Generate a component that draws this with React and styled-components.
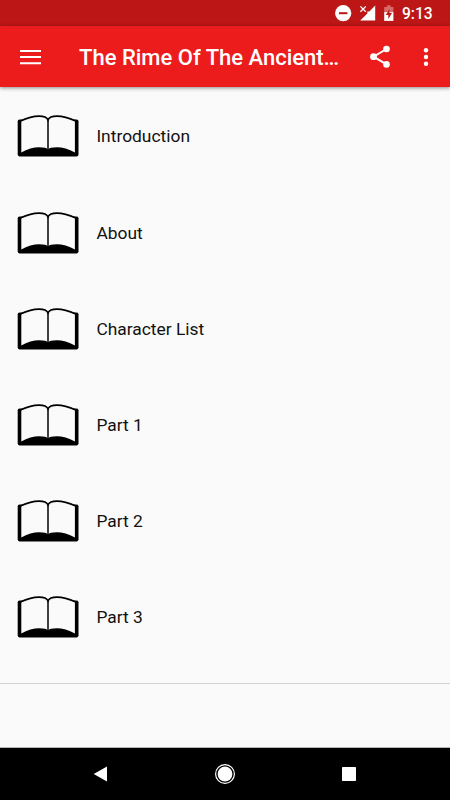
import React from 'react'
import styled, { createGlobalStyle } from 'styled-components'


const GlobalStyle = createGlobalStyle`
    *{
        box-sizing:border-box;
    }
    body{
        margin:0;
        background:#fafafa;
        font-family:Roboto, sans-serif;
    }
    svg{
        display:block;
        flex:none;
    }
`
const Screen = styled.div`
    width:450px;
    height:800px;
    display:flex;
    flex-direction:column;
    overflow:hidden;
    background:#fafafa;
`
const StatusBar = styled.div`
    flex:none;
    height:26px;
    padding-right:17px;
    display:flex;
    align-items:center;
    justify-content:flex-end;
    background:#bc1616;
    color:#fff;
`
const Clock = styled.span`
    width:31px;
    margin-left:8px;
    padding-top:2px;
    font-size:15.6px;
    font-weight:500;
    line-height:20px;
    white-space:nowrap;
`
const AppBar = styled.header`
    flex:none;
    height:61px;
    padding:0 17px 0 20px;
    display:flex;
    align-items:center;
    background:#ec1c1c;
    color:#fff;
    box-shadow:0 1px 4px rgba(0,0,0,0.45);
`
const BarButton = styled.button`
    padding:0;
    border:0;
    background:none;
    color:inherit;
    cursor:pointer;
    margin-left:${({ $gap }) => $gap || 0}px;
`
const Title = styled.h1`
    flex:1;
    margin:0 0 0 38px;
    padding-top:2px;
    font-size:22px;
    font-weight:500;
    line-height:30px;
    white-space:nowrap;
`
const List = styled.ul`
    flex:none;
    height:597px;
    margin:0;
    padding:1.3px 0 0;
    list-style:none;
    border-bottom:1px solid #d2d2d2;
`
const Row = styled.li`
    height:96.2px;
    padding-left:17px;
    display:flex;
    align-items:center;
    gap:17.4px;
`
const Label = styled.span`
    color:#111;
    font-size:17.4px;
    line-height:22px;
`
const Footer = styled.div`
    flex:1;
    border-bottom:1px solid #b4b4b4;
`
const NavBar = styled.nav`
    flex:none;
    height:52px;
    padding:0 94px 0 93px;
    display:flex;
    align-items:center;
    justify-content:space-between;
    background:#000;
    color:#fff;
`

const Book = () => (
    <svg width="62" height="42" viewBox="0 0 62 42">
        <rect x=".7" y="4.4" width="60.8" height="37" rx="1.8" fill="#000" />
        <path d="M4.3 6C10 3 17 1 22 1C27 1 30 2.6 31 5C32 2.6 35 1 40 1C45 1 52 3 57.900 6V37.600C52 34 45 32.300 40 32.300C35 32.300 32 33 31 34.800C30 33 27 32.300 22 32.300C17 32.300 10 34 4.300 37.600Z" fill="#fafafa" />
        <path d="M3.500 6C10 3 17 1.200 22 1.200C27 1.200 30 2.600 31 5C32 2.600 35 1.200 40 1.200C45 1.200 52 3 58.700 6" fill="none" stroke="#000" strokeWidth="1.7" />
        <path d="M31 4V35" stroke="#000" strokeWidth="1.5" />
    </svg>
)

const items = ['Introduction', 'About', 'Character List', 'Part 1', 'Part 2', 'Part 3']

export default () => (
    <Screen>
        <GlobalStyle />
        <StatusBar>
            <svg width="59" height="26" viewBox="0 0 59 26">
                <circle cx="8.2" cy="13.2" r="8.1" fill="#fff" />
                <path d="M4 12.200h8.400v2H4z" fill="#bc1616" />
                <path d="M40.200 5.600V20.600H25.200L32.400 13.400V11.500L34.300 11.500Z" fill="#fff" />
                <path d="M25.400 6.400l5.400 5.400M30.800 6.400l-5.400 5.400" stroke="#fff" strokeWidth="1.3" />
                <path d="M49.200 7h2.800V5.200h3.600V7h2.800v6H49.200z" fill="#d66a6a" />
                <path d="M49.200 12.200h9.200v8.700h-9.200z" fill="#fff" />
                <path d="M54.500 9l-3.700 6h2.500v4l3.700-6h-2.500z" fill="#bc1616" />
            </svg>
            <Clock>9:13</Clock>
        </StatusBar>
        <AppBar>
            <BarButton aria-label="Menu">
                <svg width="21" height="16" viewBox="0 0 21 16">
                    <path d="M0 1.900h21M0 8.100h21M0 14.300h21" stroke="#fff" strokeWidth="2" />
                </svg>
            </BarButton>
            <Title>The Rime Of The Ancient…</Title>
            <BarButton aria-label="Share">
                <svg width="21" height="24" viewBox="0 0 21 24">
                    <path d="M16.500 4L3.500 11.700L16.500 19.400" fill="none" stroke="#fff" strokeWidth="2" />
                    <circle cx="16.5" cy="4" r="3.3" fill="#fff" />
                    <circle cx="3.5" cy="11.7" r="3.4" fill="#fff" />
                    <circle cx="16.5" cy="19.4" r="3.3" fill="#fff" />
                </svg>
            </BarButton>
            <BarButton aria-label="More" $gap={28}>
                <svg width="14" height="20" viewBox="0 0 14 20">
                    <circle cx="7" cy="3.3" r="2.2" fill="#fff" />
                    <circle cx="7" cy="10" r="2.2" fill="#fff" />
                    <circle cx="7" cy="16.7" r="2.2" fill="#fff" />
                </svg>
            </BarButton>
        </AppBar>
        <List>
            {items.map(item => (
                <Row key={item}>
                    <Book />
                    <Label>{item}</Label>
                </Row>
            ))}
        </List>
        <Footer />
        <NavBar>
            <svg width="14" height="16" viewBox="0 0 14 16">
                <path d="M14 .5V15.500L.7 8Z" fill="#fff" />
            </svg>
            <svg width="22" height="22" viewBox="0 0 22 22">
                <circle cx="11" cy="11" r="9.4" fill="none" stroke="#fff" strokeWidth="1.2" />
                <circle cx="11" cy="11" r="7.4" fill="#fff" />
            </svg>
            <svg width="14" height="14" viewBox="0 0 14 14">
                <rect width="14" height="14" rx=".7" fill="#fff" />
            </svg>
        </NavBar>
    </Screen>
)
